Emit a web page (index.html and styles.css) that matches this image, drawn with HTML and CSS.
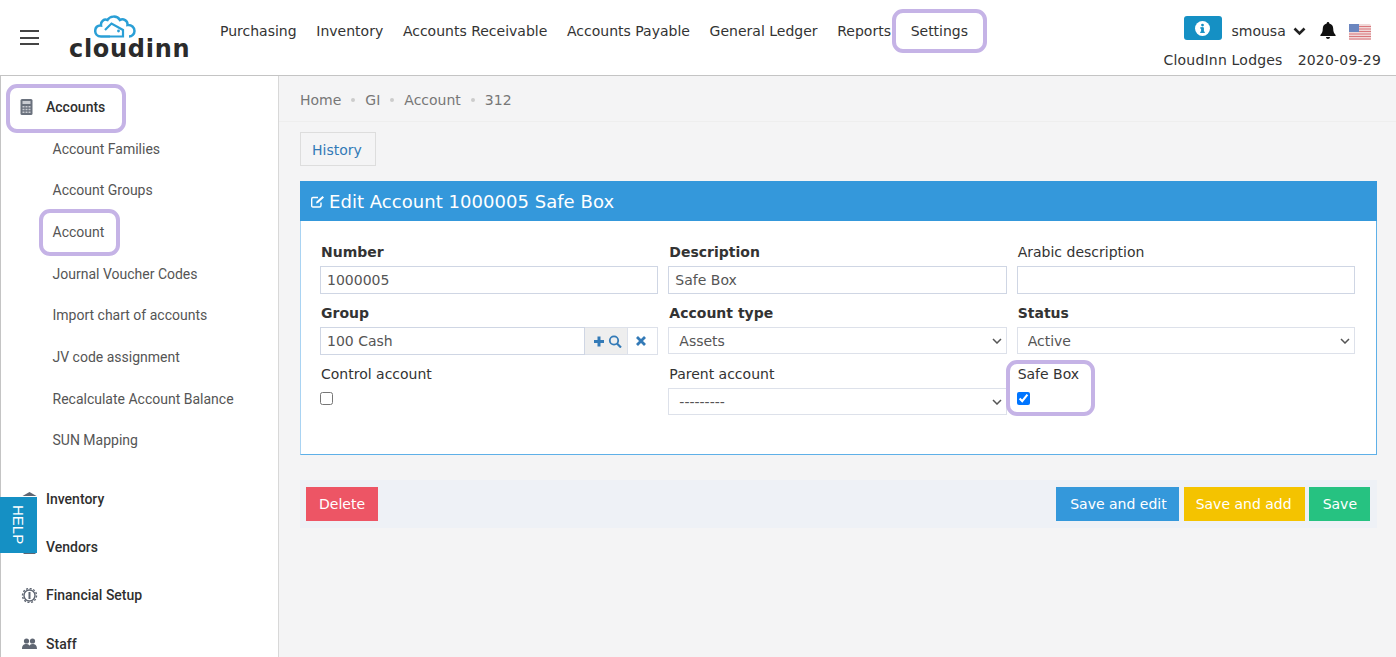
FILE: index.html
```html
<!DOCTYPE html>
<html>
<head>
	<title>CloudInn</title>
	<link rel="stylesheet" href="styles.css">
</head>
<body>
<div class="topbar">
	<div class="burger"><span></span><span></span><span></span></div>
	<div class="logo">
		<svg class="logoCloud" width="42" height="23" viewBox="0 0 42 23" fill="none" stroke="#2a9fd6" stroke-width="2.500">
			<path d="M16 21.500H7C3 21.500 1.200 18.500 1.200 16C1.200 12.500 3.500 10 7 10.500C6.500 6.500 10 3.500 13.500 5C15.500 1 23 0 26 5C29 3 34 5.500 33.500 10C37.500 9.500 40.500 12.500 40.500 16C40.500 19 38 21.500 35 21.500"/>
			<path d="M11 15L17.500 8.500L29 15V21.500H16" stroke-width="2.200"/>
			<circle cx="24.500" cy="16" r="1.400" fill="#2a9fd6" stroke="none"/>
		</svg>
		<div class="logoText">cloudinn</div>
	</div>
	<div class="nav">
		<a>Purchasing</a>
		<a>Inventory</a>
		<a>Accounts Receivable</a>
		<a>Accounts Payable</a>
		<a>General Ledger</a>
		<a>Reports</a>
		<a>Settings</a>
	</div>
	<div class="topright">
		<div class="userRow">
			<span class="infoBtn">
				<svg width="15" height="15" viewBox="0 0 16 16"><circle cx="8" cy="8" r="8" fill="#fff"/><rect x="6.500" y="6.800" width="3" height="5.500" fill="#1590c4"/><rect x="5.500" y="6.800" width="3" height="1.300" fill="#1590c4"/><rect x="5.500" y="11.400" width="5" height="1.300" fill="#1590c4"/><circle cx="8" cy="4.300" r="1.500" fill="#1590c4"/></svg>
			</span>
			<span class="userName">smousa</span>
			<svg class="chev" width="13" height="9" viewBox="0 0 13 9" fill="none" stroke="#222" stroke-width="2.600"><path d="M1.500 1.500L6.500 6.500L11.500 1.500"/></svg>
			<svg class="bell" width="16" height="17" viewBox="0 0 16 17" fill="#111"><path d="M8 0C7.200 0 6.700 .6 6.700 1.400C4.200 2 2.800 4 2.800 6.500C2.800 10 1.800 11.500 .4 13V14H15.600V13C14.200 11.500 13.200 10 13.200 6.500C13.200 4 11.800 2 9.300 1.400C9.300 .6 8.800 0 8 0ZM6 15C6 16.100 6.900 17 8 17C9.100 17 10 16.100 10 15Z"/></svg>
			<svg class="flag" width="22" height="16" viewBox="0 0 22 16">
				<rect width="22" height="16" rx="1.500" fill="#f0d8d8"/>
				<path d="M0 2.500H22M0 5H22M0 7.500H22M0 10H22M0 12.500H22M0 15H22" stroke="#d9777c" stroke-width="1.200"/>
				<rect width="10" height="8" fill="#6b86bf"/>
			</svg>
		</div>
		<div class="orgRow"><span>CloudInn Lodges</span><span>2020-09-29</span></div>
	</div>
</div>

<div class="page">
	<div class="sidebar">
		<div class="sideItem">
			<svg class="sideIcon calc" width="12" height="16" viewBox="0 0 12 16"><rect width="12" height="16" rx="1.500" fill="#6a717d"/><rect x="2" y="2" width="8" height="3" fill="#c9ccd2"/><path d="M2 7H4V8.500H2ZM5 7H7V8.500H5ZM8 7H10V8.500H8ZM2 9.800H4V11.300H2ZM5 9.800H7V11.300H5ZM8 9.800H10V11.300H8ZM2 12.600H4V14.100H2ZM5 12.600H7V14.100H5ZM8 12.600H10V14.100H8Z" fill="#c9ccd2"/></svg>
			<span>Accounts</span>
		</div>
		<div class="subList">
			<a>Account Families</a>
			<a>Account Groups</a>
			<a>Account</a>
			<a>Journal Voucher Codes</a>
			<a>Import chart of accounts</a>
			<a>JV code assignment</a>
			<a>Recalculate Account Balance</a>
			<a>SUN Mapping</a>
		</div>
		<div class="sideGroup">
			<div class="sideItem">
				<svg class="sideIcon" width="14" height="14" viewBox="0 0 14 14"><path d="M7 0L14 4H0Z" fill="#5f6672"/><rect x="1" y="5" width="12" height="9" fill="#5f6672"/></svg>
				<span>Inventory</span>
			</div>
			<div class="sideItem">
				<svg class="sideIcon" width="14" height="14" viewBox="0 0 14 14"><circle cx="7" cy="4" r="3.500" fill="#5f6672"/><path d="M1 14C1 9 4 8 7 8C10 8 13 9 13 14Z" fill="#5f6672"/></svg>
				<span>Vendors</span>
			</div>
			<div class="sideItem">
				<svg class="sideIcon" width="15" height="15" viewBox="0 0 15 15"><circle cx="7.500" cy="7.500" r="5.500" fill="none" stroke="#5f6672" stroke-width="1.400"/><circle cx="7.500" cy="7.500" r="7" fill="none" stroke="#5f6672" stroke-width="1.400" stroke-dasharray="2 1.660"/><rect x="6.500" y="4" width="2" height="7" fill="#5f6672"/></svg>
				<span>Financial Setup</span>
			</div>
			<div class="sideItem">
				<svg class="sideIcon" width="15" height="11" viewBox="0 0 15 11" fill="#5f6672"><circle cx="4.500" cy="3" r="2.600"/><circle cx="10.500" cy="3" r="2.600"/><path d="M0 11C0 7 2 6 4.500 6C7 6 7.200 7 7.500 8C7.800 7 8 6 10.500 6C13 6 15 7 15 11Z"/></svg>
				<span>Staff</span>
			</div>
		</div>
	</div>

	<div class="main">
		<div class="crumbs">
			<span>Home</span><i></i><span>GI</span><i></i><span>Account</span><i></i><span>312</span>
		</div>
		<div class="content">
			<a class="historyBtn">History</a>
			<div class="panel">
				<div class="panelHead">
					<svg width="14" height="13" viewBox="0 0 14 13" fill="none" stroke="#fff" stroke-width="1.400"><path d="M10 7.500V10.500C10 11.500 9.500 12 8.500 12H2C1 12 .7 11.500 .7 10.500V4C.7 3 1 2.500 2 2.500H7"/><path d="M5 8.500L5.500 6.500L11.500 1L13 2.500L7 8Z" fill="#fff" stroke="none"/></svg>
					Edit Account 1000005 Safe Box
				</div>
				<div class="panelBody">
					<div class="field">
						<label class="strong">Number</label>
						<input class="textInput" type="text" value="1000005">
					</div>
					<div class="field">
						<label class="strong">Description</label>
						<input class="textInput" type="text" value="Safe Box">
					</div>
					<div class="field">
						<label>Arabic description</label>
						<input class="textInput" type="text" value="">
					</div>

					<div class="field">
						<label class="strong">Group</label>
						<div class="lookup">
							<input class="textInput" type="text" value="100 Cash">
							<span class="lookupBtn grey">
								<svg width="30" height="13" viewBox="0 0 30 13"><path d="M4.500 1.500H7.500V5H11V8H7.500V11.500H4.500V8H1V5H4.500Z" fill="#337ab7"/><circle cx="21" cy="5.500" r="4.200" fill="none" stroke="#337ab7" stroke-width="1.800"/><path d="M24 8.500L28 12.500" stroke="#337ab7" stroke-width="2.200"/></svg>
							</span>
							<span class="lookupBtn clearBtn">
								<svg width="10" height="10" viewBox="0 0 10 10"><path d="M1 1L9 9M9 1L1 9" stroke="#337ab7" stroke-width="2.800"/></svg>
							</span>
						</div>
					</div>
					<div class="field">
						<label class="strong">Account type</label>
						<select class="selectInput"><option>Assets</option></select>
					</div>
					<div class="field">
						<label class="strong">Status</label>
						<select class="selectInput"><option>Active</option></select>
					</div>

					<div class="field">
						<label>Control account</label>
						<input class="check" type="checkbox">
					</div>
					<div class="field">
						<label>Parent account</label>
						<select class="selectInput"><option>---------</option></select>
					</div>
					<div class="field">
						<label>Safe Box</label>
						<input class="check" type="checkbox" checked>
					</div>
				</div>
			</div>
			<div class="actions">
				<a class="btn red">Delete</a>
				<span class="spacer"></span>
				<a class="btn blue">Save and edit</a>
				<a class="btn yellow">Save and add</a>
				<a class="btn green">Save</a>
			</div>
		</div>
	</div>
</div>

<div class="helpTab"><span>HELP</span></div>
<div class="mark markSettings"></div>
<div class="mark markAccounts"></div>
<div class="mark markAccount"></div>
<div class="mark markSafe"></div>
</body>
</html>
```

FILE: styles.css
```css
html, body {
	margin: 0;
	padding: 0;
	height: 100%;
	overflow: hidden;
}
body {
	font-family: "DejaVu Sans", sans-serif;
	font-size: 14px;
	color: #333;
	background-color: #f4f4f5;
}
div, a, span { box-sizing: border-box; }

.topbar {
	display: flex;
	height: 76px;
	background-color: #fff;
	border-bottom: 1px solid #c4c4c4;
	color: #333;
}
.burger {
	width: 19px;
	margin: 30px 0 0 20px;
}
.burger span {
	display: block;
	height: 2px;
	margin-bottom: 4.500px;
	background-color: #444;
}
.logo {
	width: 120px;
	margin: 15px 0 0 30px;
}
.logoCloud {
	display: block;
	margin-left: 25px;
}
.logoText {
	margin-top: 1px;
	font-weight: 700;
	font-size: 24px;
	line-height: 20px;
	letter-spacing: .7px;
	color: #2b2b2b;
}
.nav {
	display: flex;
	gap: 19.700px;
	margin: 22px 0 0 31px;
	font-size: 14px;
	line-height: 18px;
}
.topright {
	margin-left: auto;
	padding: 16px 15px 0 0;
}
.userRow {
	display: flex;
	align-items: center;
	height: 24px;
	margin-left: 20px;
}
.infoBtn {
	display: flex;
	align-items: center;
	justify-content: center;
	width: 38px;
	height: 24px;
	background-color: #1590c4;
	border-radius: 3px;
}
.userName { margin: 6px 0 0 10px; }
.chev { margin: 7px 0 0 7px; }
.bell { margin: 4px 0 0 14px; }
.flag { margin: 7px 0 0 13px; }
.orgRow {
	display: flex;
	justify-content: space-between;
	gap: 15px;
	margin-top: 11px;
	line-height: 18px;
	letter-spacing: .2px;
}

.page {
	display: flex;
	height: 581px;
}
.sidebar {
	width: 279px;
	flex: none;
	background-color: #fff;
	border-left: 1px solid #c4c4c4;
	border-right: 1px solid #d8d8d8;
	font-family: "Roboto", sans-serif;
	font-size: 14px;
	font-weight: 500;
	color: #2f2f2f;
	padding-top: 9px;
}
.sideItem {
	display: flex;
	align-items: center;
	height: 44px;
}
.sideIcon {
	width: 17px;
	margin: 0 8px 0 20px;
}
.sideIcon.calc {
	margin: 0 11px 0 17px;
}
.subList {
	padding-left: 51.500px;
	font-size: 14px;
	font-weight: 400;
	color: #555;
	margin-top: -.5px;
}
.subList a {
	display: block;
	height: 41.700px;
	line-height: 41.700px;
}
.sideGroup {
	margin-top: 12.500px;
}
.sideGroup .sideItem {
	height: 48.300px;
}

.main {
	flex: 1;
}
.crumbs {
	display: flex;
	align-items: center;
	height: 46px;
	padding: 2px 0 0 21px;
	border-bottom: 1px solid #eee;
	color: #777;
}
.crumbs i {
	width: 4px;
	height: 4px;
	margin: 0 10px;
	border-radius: 50%;
	background-color: #ccc;
}
.content {
	padding: 10px 19px 0 21px;
}
.historyBtn {
	display: block;
	width: 76px;
	height: 34px;
	line-height: 34px;
	padding-right: 2px;
	text-align: center;
	border: 1px solid #ddd;
	color: #337ab7;
}
.panel {
	margin-top: 15px;
	background-color: #fff;
	border: 1px solid #5eb0e8;
	border-left-color: #a9d3f2;
	height: 274px;
}
.panelHead {
	display: flex;
	align-items: center;
	gap: 4px;
	height: 40px;
	margin: -1px -1px 0;
	padding-left: 11px;
	background-color: #3498db;
	color: #fff;
	font-size: 18px;
	letter-spacing: .04px;
}
.panelBody {
	display: grid;
	grid-template-columns: repeat(3, 1fr);
	column-gap: 10px;
	padding: 22px 21px 0 19px;
}
.field label {
	display: block;
	height: 23px;
	padding-left: 1px;
	line-height: 18px;
}
.field label.strong { font-weight: 700; }
.field {
	height: 61px;
}
.textInput, .selectInput {
	display: block;
	box-sizing: border-box;
	width: 100%;
	height: 28px;
	border: 1px solid #cfd6e4;
	background-color: #fff;
	font-family: "DejaVu Sans", sans-serif;
	font-size: 14px;
	color: #555;
	padding: 0 6px;
	border-radius: 0;
	outline: none;
}
.selectInput {
	height: 27px;
	padding-left: 10px;
	border-color: #dde1ea;
	appearance: none;
	background-image: url("data:image/svg+xml,%3Csvg xmlns='http://www.w3.org/2000/svg' width='10' height='6'%3E%3Cpath d='M1 1L5 5L9 1' fill='none' stroke='%23555' stroke-width='1.500'/%3E%3C/svg%3E");
	background-repeat: no-repeat;
	background-position: right 4px center;
}
.lookup {
	display: flex;
}
.lookup .textInput {
	flex: 1;
	min-width: 0;
}
.lookupBtn {
	display: flex;
	align-items: center;
	justify-content: center;
	width: 30px;
	height: 28px;
	border: 1px solid #dde1ea;
	border-left: none;
	background-color: #fff;
}
.lookupBtn.grey {
	width: 43px;
	padding-left: 3px;
	background-color: #eee;
}
.clearBtn {
	padding-right: 4px;
}
.check {
	display: block;
	width: 13px;
	height: 13px;
	margin: 4px 0 0;
}
.actions {
	display: flex;
	gap: 5px;
	height: 48px;
	margin-top: 25px;
	padding: 7px;
	padding-left: 6px;
	background-color: #eef1f6;
}
.spacer { flex: 1; }
.btn {
	height: 34px;
	line-height: 34px;
	padding: 0 13px;
	color: #fff;
}
.red { background-color: #ed5565; }
.blue { background-color: #3498db; padding: 0 12px 0 14px; }
.yellow { background-color: #f4c300; padding: 0 13px 0 12px; }
.green { background-color: #26c281; margin-left: -1px; padding: 0 13px 0 14px; }

.helpTab {
	position: absolute;
	left: 0;
	top: 497px;
	display: flex;
	align-items: center;
	justify-content: center;
	width: 37px;
	height: 56px;
	background-color: #1590c4;
	color: #fff;
	font-family: "Liberation Sans", sans-serif;
	font-size: 15px;
}
.helpTab span {
	writing-mode: vertical-rl;
}
.mark {
	position: absolute;
	border: 4px solid #c5b3e6;
	border-radius: 11px;
	pointer-events: none;
}
.markSettings { left: 892px; top: 9px; width: 95px; height: 44px; }
.markAccounts { left: 6px; top: 84px; width: 120px; height: 49px; }
.markAccount { left: 39px; top: 209px; width: 81px; height: 47px; }
.markSafe { left: 1006px; top: 360px; width: 89px; height: 56px; }
```
